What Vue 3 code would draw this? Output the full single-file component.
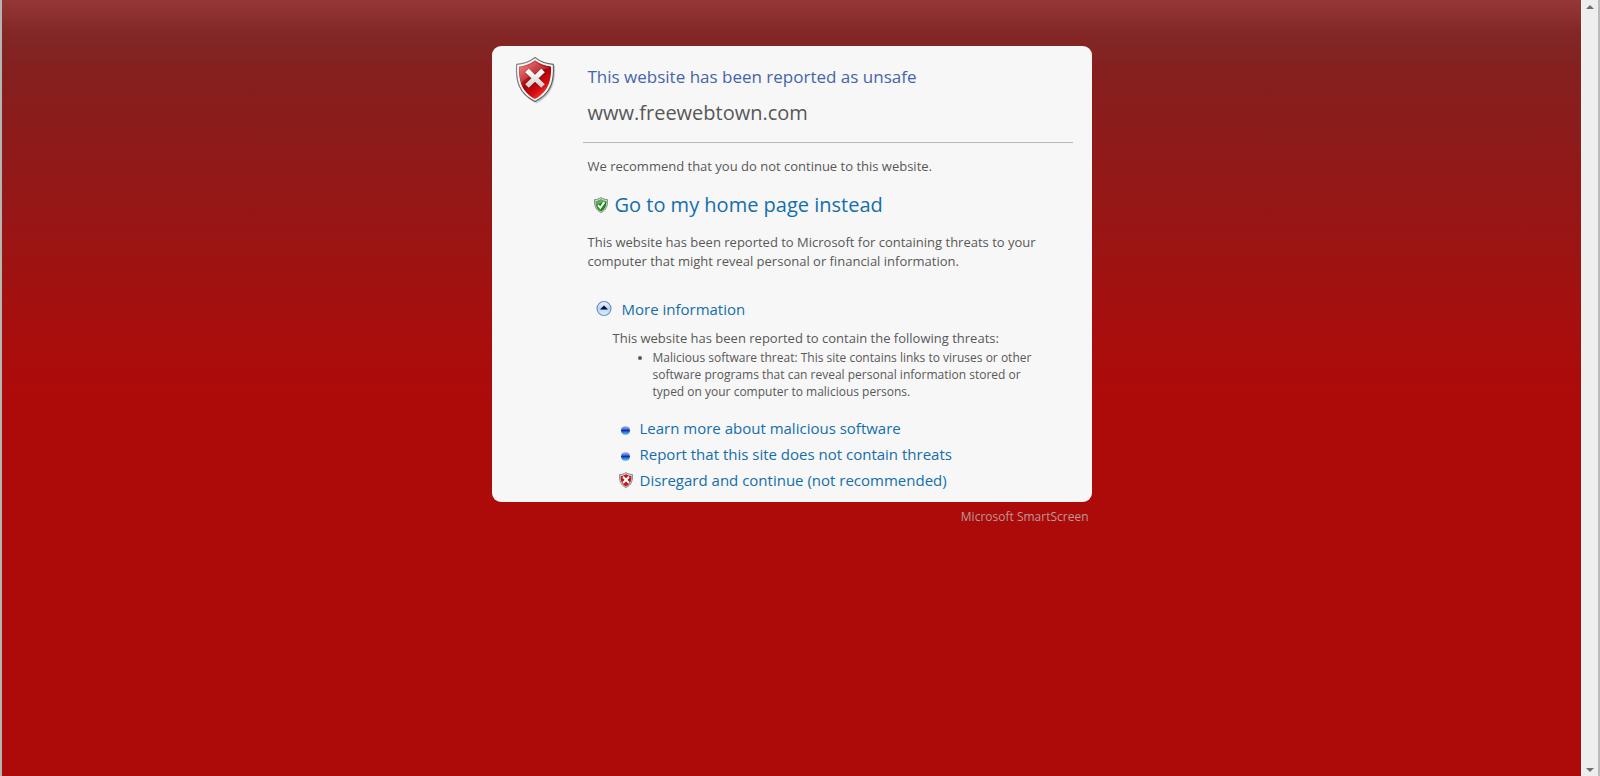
<script setup>
import { ref } from 'vue'

const expanded = ref(true)
</script>

<template>
  <div class="window">
    <main class="page">
      <div class="column">
        <section class="card">
          <svg class="shield" viewBox="0 0 42 48" aria-hidden="true">
            <defs>
              <linearGradient id="rim" x1="0" y1="0" x2="1" y2="1">
                <stop offset="0" stop-color="#8c8c8c" />
                <stop offset="1" stop-color="#4f4f4f" />
              </linearGradient>
              <linearGradient id="red" x1="0" y1="0" x2="0.7" y2="1">
                <stop offset="0" stop-color="#e58a88" />
                <stop offset="0.35" stop-color="#c6262a" />
                <stop offset="0.55" stop-color="#a00408" />
                <stop offset="0.8" stop-color="#d80d10" />
                <stop offset="1" stop-color="#ec5048" />
              </linearGradient>
              <linearGradient id="cross" x1="0" y1="0" x2="0" y2="1">
                <stop offset="0" stop-color="#ffffff" />
                <stop offset="1" stop-color="#d2d2d2" />
              </linearGradient>
            </defs>
            <path d="M21 3C26 7 32 9 40 9.500C41 26 37 40 21.500 47.500C6 40 2 27 3 9.500C10 9 16 7 21 3Z" fill="#000" opacity=".18" />
            <path d="M20 1.500C25 5.500 31 8 38.300 8.300C39.500 25 36 38 20 45.500C4 38 .500 25 1.700 8.300C9 8 15 5.500 20 1.500Z" fill="#fafafa" stroke="url(#rim)" stroke-width="1.200" />
            <path d="M20 4.300C25 8 30 10 36 10.500C36.600 24 33.500 36 20 43C6.500 36 3.400 24 4 10.500C10 10 15 8 20 4.300Z" fill="url(#red)" />
            <path d="M5 11.500C11 11 16 9 20 6C24 9 29 11 35 11.500C27 14 12 20 6 27C4.800 22 4.700 17 5 11.500Z" fill="#fff" opacity=".16" />
            <path d="M12.500 15.500L27.500 30M27.500 15.500L12.500 30" stroke="#750006" stroke-width="6.500" opacity=".35" />
            <path d="M12 14.500L28 30M28 14.500L12 30" stroke="url(#cross)" stroke-width="5.200" />
          </svg>

          <div class="content">
            <header class="heading">
              <h1>This website has been reported as unsafe</h1>
              <p class="site">www.freewebtown.com</p>
            </header>

            <div class="body">
              <p>We recommend that you do not continue to this website.</p>

              <a class="home" href="#">
                <svg viewBox="0 0 14 16" width="14" height="16" aria-hidden="true">
                  <path d="M7 .600C9 1.900 11 2.500 13.400 2.600C13.800 8.500 12.500 13 7 15.500C1.500 13 .200 8.500 .600 2.600C3 2.500 5 1.900 7 .600Z" fill="#d6d6d6" stroke="#858585" stroke-width="1" />
                  <path d="M7 2.200C8.800 3.300 10.400 3.900 12.300 4C12.500 8.500 11.300 12.200 7 14.300C2.700 12.200 1.500 8.500 1.700 4C3.600 3.900 5.200 3.300 7 2.200Z" fill="#108a10" />
                  <path d="M7 2.200C8.800 3.300 10.400 3.900 12.300 4L2.300 8C1.800 6.500 1.700 5.500 1.700 4C3.600 3.900 5.200 3.300 7 2.200Z" fill="#8dcc84" opacity=".6" />
                  <path d="M4 8.200L6.300 10.800L10.300 5.200" fill="none" stroke="#fff" stroke-width="2" />
                </svg>
                <span>Go to my home page instead</span>
              </a>

              <p>This website has been reported to Microsoft for containing threats to your computer that might reveal personal or financial information.</p>

              <button class="more" type="button" :aria-expanded="expanded" @click="expanded = !expanded">
                <svg viewBox="0 0 16 16" width="16" height="16" aria-hidden="true">
                  <defs>
                    <linearGradient id="disc" x1="0" y1="0" x2="0" y2="1">
                      <stop offset="0" stop-color="#f4f8fd" />
                      <stop offset="0.5" stop-color="#b9d3ee" />
                      <stop offset="1" stop-color="#d2f8ff" />
                    </linearGradient>
                  </defs>
                  <circle cx="8" cy="7.500" r="7" fill="url(#disc)" stroke="#7191c4" stroke-width="1.200" />
                  <path d="M8 4.500L12 8.500H4Z" fill="#06064e" />
                </svg>
                <span>More information</span>
              </button>

              <div v-if="expanded" class="details">
                <p>This website has been reported to contain the following threats:</p>
                <ul class="threats">
                  <li>Malicious software threat: This site contains links to viruses or other software programs that can reveal personal information stored or typed on your computer to malicious persons.</li>
                </ul>
                <ul class="links">
                  <li>
                    <span class="slot"><i class="bead"></i></span>
                    <a href="#">Learn more about malicious software</a>
                  </li>
                  <li>
                    <span class="slot"><i class="bead"></i></span>
                    <a href="#">Report that this site does not contain threats</a>
                  </li>
                  <li>
                    <span class="slot">
                      <svg viewBox="0 0 14 16" width="14" height="16" aria-hidden="true">
                        <path d="M7 .600C9 1.900 11 2.500 13.400 2.600C13.800 8.500 12.500 13 7 15.500C1.500 13 .200 8.500 .600 2.600C3 2.500 5 1.900 7 .600Z" fill="#d6d6d6" stroke="#858585" stroke-width="1" />
                        <path d="M7 2.200C8.800 3.300 10.400 3.900 12.300 4C12.500 8.500 11.300 12.200 7 14.300C2.700 12.200 1.500 8.500 1.700 4C3.600 3.900 5.200 3.300 7 2.200Z" fill="#c3161b" />
                        <path d="M4 4.800L10 11M10 4.800L4 11" stroke="#fff" stroke-width="2" />
                      </svg>
                    </span>
                    <a href="#">Disregard and continue (not recommended)</a>
                  </li>
                </ul>
              </div>
            </div>
          </div>
        </section>
        <p class="brand">Microsoft SmartScreen</p>
      </div>
    </main>

    <div class="scrollbar" aria-hidden="true">
      <svg viewBox="0 0 8 4" width="8" height="4"><path d="M4 0L8 4H0Z" fill="#6e6e6e" /></svg>
      <svg viewBox="0 0 8 4" width="8" height="4"><path d="M0 0H8L4 4Z" fill="#6e6e6e" /></svg>
    </div>
  </div>
</template>

<style>
body {
  margin: 0;
}
</style>

<style scoped>
.window {
  display: flex;
  min-height: 100vh;
  box-sizing: border-box;
  border-left: 2px solid #b4b6b2;
  font-family: "Open Sans", "Noto Sans", sans-serif;
  font-size: 13px;
  line-height: 19px;
  color: #575757;
}

.page {
  flex: 1;
  display: flex;
  justify-content: center;
  align-items: flex-start;
  padding: 46px 16px 16px;
  background: #ad0b0a linear-gradient(#963737 0, #822726 34px, #84201f 70px, #a80e0d 340px, #ad0b0a 400px) no-repeat;
}

.column {
  width: 100%;
  max-width: 600px;
}

.card {
  display: flex;
  padding: 19px 19px 9px 23px;
  border-radius: 9px;
  background: #f7f7f7;
}

.shield {
  flex: none;
  width: 42px;
  height: 48px;
  margin: -9px 26px 0 0;
}

.content {
  flex: 1;
  min-width: 0;
}

h1,
p,
ul {
  margin: 0;
  padding: 0;
  font-weight: 400;
}

ul {
  list-style: none;
}

a {
  color: #136eab;
  text-decoration: none;
}

.heading {
  padding: 0 5px 15px;
  border-bottom: 1px solid #b3bac1;
}

h1 {
  font-size: 17px;
  line-height: 24px;
  color: #4465a9;
}

.site {
  margin-top: 10px;
  font-size: 20px;
  line-height: 28px;
}

.body {
  padding: 14px 16px 0 5px;
}

.home {
  display: flex;
  align-items: center;
  gap: 7px;
  margin: 14px 0 13px 6px;
  font-size: 20px;
  line-height: 30px;
}

.more {
  display: flex;
  align-items: center;
  gap: 10px;
  margin: 26px 0 8px 8px;
  padding: 0;
  border: 0;
  background: none;
  font: inherit;
  font-size: 15px;
  line-height: 24px;
  color: #136eab;
  cursor: pointer;
}

.details {
  padding-left: 25px;
}

.threats {
  margin: 1px 0 15px;
  padding: 0 10px 0 40px;
  list-style: disc;
  font-size: 12px;
  line-height: 17px;
}

.links li {
  display: flex;
  align-items: center;
  gap: 7px;
  padding-left: 6px;
  font-size: 15px;
  line-height: 26px;
}

.slot {
  display: flex;
  justify-content: center;
  width: 14px;
}

.bead {
  width: 9px;
  height: 9px;
  margin-top: 4px;
  border-radius: 5px;
  background: linear-gradient(#b9c4ee 0, #4c68d4 35%, #0c2fb4 50%, #2f7fd8 70%, #6fd0f4 100%);
}

.brand {
  margin-top: 5px;
  padding-right: 3px;
  font-size: 12px;
  text-align: right;
  color: #b89a98;
}

.scrollbar {
  flex: none;
  display: flex;
  flex-direction: column;
  justify-content: space-between;
  align-items: center;
  box-sizing: border-box;
  width: 19px;
  padding: 5px 0 4px;
  border-left: 1px solid #fbf5f0;
  border-right: 2px solid #bababa;
  background: #eeeeee;
}
</style>
